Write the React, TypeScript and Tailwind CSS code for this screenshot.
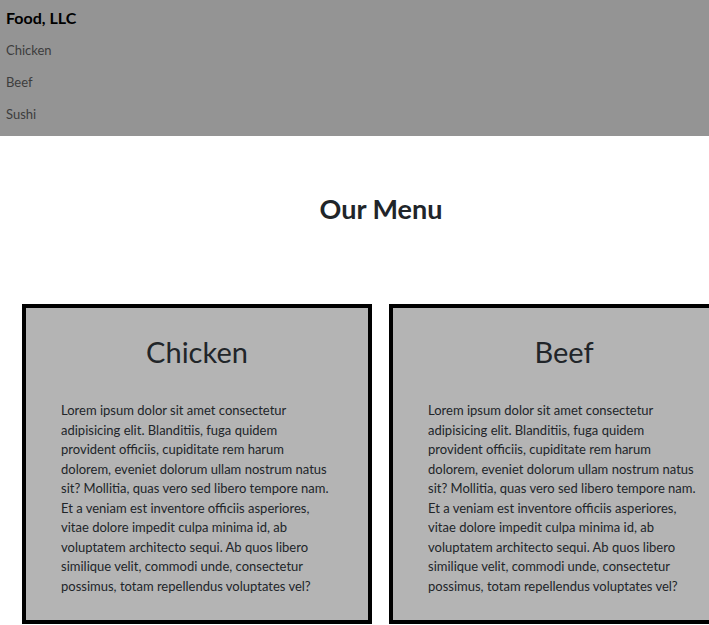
import React from "react";

const lines = [
  "Lorem ipsum dolor sit amet consectetur",
  "adipisicing elit. Blanditiis, fuga quidem",
  "provident officiis, cupiditate rem harum",
  "dolorem, eveniet dolorum ullam nostrum natus",
  "sit? Mollitia, quas vero sed libero tempore nam.",
  "Et a veniam est inventore officiis asperiores,",
  "vitae dolore impedit culpa minima id, ab",
  "voluptatem architecto sequi. Ab quos libero",
  "similique velit, commodi unde, consectetur",
  "possimus, totam repellendus voluptates vel?",
];

function Card({ title }: { title: string }) {
  return (
    <div className="w-[350px] shrink-0 border-4 border-black bg-[#b4b4b4] text-[#212529]">
      <h3 className="pt-[24px] text-center text-[29px] leading-[40px] font-normal">{title}</h3>
      <p className="mt-[29px] px-[35px] pb-[24px] text-[13px] leading-[19.5px] whitespace-nowrap">
        {lines.map((l, i) => (
          <span key={i} className="block">
            {l}
          </span>
        ))}
      </p>
    </div>
  );
}

export default function App() {
  return (
    <div className="min-h-screen overflow-hidden bg-white" style={{ fontFamily: "Lato, 'Open Sans', sans-serif" }}>
      <header className="h-[136px] bg-[#949494] px-[6px] pt-[2px]">
        <div className="flex h-[32px] items-center text-[16px] font-bold text-black">Food, LLC</div>
        <nav className="mt-[1px] flex flex-col">
          {["Chicken", "Beef", "Sushi"].map((n) => (
            <a key={n} className="flex h-[32px] items-center text-[13px] text-[#3d3d3d]">
              {n}
            </a>
          ))}
        </nav>
      </header>
      <section className="w-[762px]">
        <h2 className="pt-[56px] text-center text-[27px] leading-[34px] font-bold text-[#212529]">Our Menu</h2>
        <div className="mt-[78px] flex gap-[17px] pl-[22px]">
          <Card title="Chicken" />
          <Card title="Beef" />
          <Card title="Sushi" />
        </div>
      </section>
    </div>
  );
}
